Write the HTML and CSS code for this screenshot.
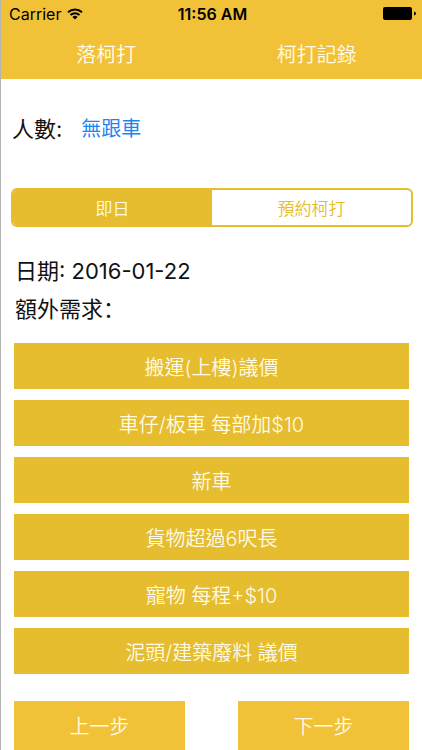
FILE: index.html
```html
<!DOCTYPE html>
<html lang="zh-Hant">
<head>
  <meta charset="utf-8">
  <meta name="viewport" content="width=device-width, initial-scale=1">
  <title>落柯打</title>
  <link rel="stylesheet" href="styles.css">
</head>
<body>
  <header class="top">
    <div class="status">
      <div class="carrier">
        <span>Carrier</span>
        <svg class="wifi" viewBox="0 0 16 12" aria-hidden="true">
          <path d="M1 4.2a10.2 10.2 0 0 1 14 0M3.5 7a6.6 6.6 0 0 1 9 0" fill="none" stroke="currentColor" stroke-width="2"/>
          <path d="M8 11.5 5.4 8.9a3.8 3.8 0 0 1 5.2 0z" fill="currentColor"/>
        </svg>
      </div>
      <time class="clock">11:56 AM</time>
      <svg class="battery" viewBox="0 0 33 13" aria-hidden="true">
        <rect width="29" height="13" rx="2"/>
        <path d="M31 4.5q2 .6 2 2t-2 2z"/>
      </svg>
    </div>
    <nav class="tabs">
      <button class="tab" type="button">落柯打</button>
      <button class="tab" type="button">柯打記錄</button>
    </nav>
  </header>

  <main>
    <div class="people">
      <span>人數:</span>
      <button class="picker" type="button">無跟車</button>
    </div>

    <div class="segments" role="group" aria-label="日期">
      <button class="segment selected" type="button" aria-pressed="true">即日</button>
      <button class="segment" type="button" aria-pressed="false">預約柯打</button>
    </div>

    <div class="details">
      <p class="line">日期: 2016-01-22</p>
      <p class="line">額外需求<span class="colon" lang="zh-Hans">：</span></p>
    </div>

    <div class="options">
      <button class="option" type="button">搬運(上樓)議價</button>
      <button class="option" type="button">車仔/板車 每部加$10</button>
      <button class="option" type="button">新車</button>
      <button class="option" type="button">貨物超過6呎長</button>
      <button class="option" type="button">寵物 每程+$10</button>
      <button class="option" type="button">泥頭/建築廢料 議價</button>
    </div>
  </main>

  <footer class="steps">
    <button class="step" type="button">上一步</button>
    <button class="step" type="button">下一步</button>
  </footer>
</body>
</html>
```

FILE: styles.css
```css
:root {
  --bar: #f1c138;
  --gold: #e5bd2e;
  --cream: #fffbe6;
}

* {
  box-sizing: border-box;
}

body {
  margin: 0;
  min-height: 100vh;
  border-left: 1px solid #b4b4b4;
  background: #fff;
  color: #111;
  font-family: Inter, "Noto Sans CJK TC", sans-serif;
  font-size: 20px;
}

button {
  margin: 0;
  padding: 0;
  border: 0;
  background: none;
  color: var(--cream);
  font: inherit;
  font-weight: 350;
}

.top {
  background: var(--bar);
}

.status {
  display: grid;
  grid-template-columns: 1fr auto 1fr;
  align-items: center;
  height: 27px;
  padding: 0 6px 0 8px;
  color: #000;
  font-size: 16px;
}

.carrier {
  display: flex;
  align-items: center;
  gap: 6px;
}

.wifi {
  width: 16px;
  height: 12px;
}

.clock {
  font-weight: 600;
}

.battery {
  justify-self: end;
  width: 33px;
  height: 13px;
}

.tabs {
  display: grid;
  grid-template-columns: 1fr 1fr;
  height: 52px;
}

.people {
  display: flex;
  align-items: center;
  gap: 19px;
  padding: 34px 11px 0;
  font-size: 22px;
  line-height: 32px;
}

.picker {
  color: #1b86f2;
  font-size: 20px;
  font-weight: 400;
}

.segments {
  display: grid;
  grid-template-columns: 1fr 1fr;
  height: 39px;
  margin: 43px 9px 0 10px;
  overflow: hidden;
  border: 2px solid var(--gold);
  border-radius: 6px;
}

.segment {
  color: var(--gold);
  font-size: 17px;
}

.segment.selected {
  background: var(--gold);
  color: var(--cream);
}

.details {
  padding: 25px 14px 0;
}

.line {
  margin: 0;
  font-size: 22px;
  line-height: 38px;
}

.colon {
  font-family: "Noto Sans CJK SC", sans-serif;
  line-height: 1;
}

.options {
  display: grid;
  gap: 11px;
  padding: 15px 13px 0;
}

.option {
  height: 46px;
  background: var(--gold);
}

.steps {
  display: grid;
  grid-template-columns: 1fr 1fr;
  gap: 53px;
  padding: 27px 13px 0;
}

.step {
  height: 49px;
  background: var(--bar);
}
```
